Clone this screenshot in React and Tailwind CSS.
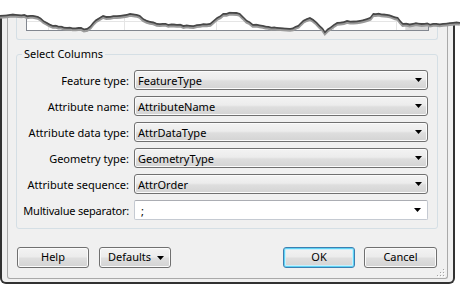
import React from "react";

const font = { fontFamily: '"Noto Sans", "Liberation Sans", sans-serif' };

// rough torn-paper edge at the top of the screenshot
const tearPts = [
  [0, 15], [10, 14], [33, 15], [38, 16], [47, 22], [53, 25], [67, 27], [87, 28], [93, 22],
  [98, 18], [103, 15], [110, 16], [120, 15], [130, 13], [140, 15], [147, 20], [157, 23],
  [177, 24], [190, 25], [200, 24], [210, 23], [217, 17], [223, 13], [233, 12], [240, 13],
  [247, 20], [253, 24], [263, 25], [277, 27], [290, 28], [298, 25], [303, 20], [310, 17],
  [317, 22], [323, 28], [325, 31], [330, 27], [337, 22], [347, 20], [360, 20], [370, 17],
  [373, 13], [387, 14], [398, 17], [403, 23], [413, 23], [433, 23], [443, 23], [453, 22],
  [460, 22],
];

function roughen(pts) {
  let seed = 7;
  const rnd = () => {
    seed = (seed * 9301 + 49297) % 233280;
    return seed / 233280 - 0.5;
  };
  const out = [];
  for (let i = 0; i < pts.length - 1; i++) {
    const [x1, y1] = pts[i];
    const [x2, y2] = pts[i + 1];
    const n = Math.max(1, Math.round((x2 - x1) / 3));
    for (let k = 0; k < n; k++) {
      const t = k / n;
      out.push([x1 + (x2 - x1) * t, y1 + (y2 - y1) * t + (k === 0 ? 0 : rnd() * 1.4)]);
    }
  }
  out.push(pts[pts.length - 1]);
  return out;
}

function Tear() {
  const pts = roughen(tearPts);
  const line = pts.map(([x, y]) => `${x.toFixed(1)},${y.toFixed(1)}`).join(" L");
  return (
    <svg className="absolute left-0 top-0" width="460" height="40" viewBox="0 0 460 40">
      <defs>
        <filter id="soft" x="-5%" y="-50%" width="110%" height="200%">
          <feGaussianBlur stdDeviation="0.7" />
        </filter>
      </defs>
      <path d={`M${line}`} fill="none" stroke="#9a9a9a" strokeWidth="4" transform="translate(0 1.8)" filter="url(#soft)" />
      <path d={`M${line}`} fill="none" stroke="#474747" strokeWidth="2.2" transform="translate(0 0.7)" />
      <path d={`M0,0 L0,${pts[0][1]} L${line} L460,0 Z`} fill="#ffffff" />
    </svg>
  );
}

function Arrow() {
  return (
    <svg width="7" height="4" viewBox="0 0 7 4" className="shrink-0">
      <path d="M0 0H7L3.5 4Z" fill="#000" />
    </svg>
  );
}

function Combo({ value }) {
  return (
    <div className="flex h-[20px] flex-1 items-center rounded-[3px] border border-[#707070] bg-[linear-gradient(#f3f3f3_0%,#ececec_45%,#dedede_55%,#d3d3d3_100%)] pl-[3px] pr-[5px] shadow-[inset_0_0_0_1px_#fbfbfb]">
      <span className="flex-1 leading-none">{value}</span>
      <Arrow />
    </div>
  );
}

function EditCombo({ value }) {
  return (
    <div className="flex h-[20px] flex-1 items-center rounded-[2px] border border-[#c5cad2] border-t-[#abadb3] bg-white pl-[6px] pr-[6px]">
      <span className="flex-1 leading-none">{value}</span>
      <Arrow />
    </div>
  );
}

const rows = [
  ["Feature type:", "FeatureType"],
  ["Attribute name:", "AttributeName"],
  ["Attribute data type:", "AttrDataType"],
  ["Geometry type:", "GeometryType"],
  ["Attribute sequence:", "AttrOrder"],
];

const btn =
  "flex h-[21px] items-center rounded-[3px] border bg-[linear-gradient(#f3f3f3_0%,#ececec_45%,#dedede_55%,#d3d3d3_100%)] text-black";

function Grip() {
  const dots = [[6, 0], [3, 3], [6, 3], [0, 6], [3, 6], [6, 6]];
  return (
    <svg className="absolute bottom-[1px] right-[2px]" width="8" height="8" viewBox="0 0 8 8">
      {dots.map(([x, y]) => (
        <g key={`${x}-${y}`}>
          <rect x={x + 1} y={y + 1} width="1" height="1" fill="#ffffff" />
          <rect x={x} y={y} width="1" height="1" fill="#a4a4a4" />
        </g>
      ))}
    </svg>
  );
}

const topCols = [22, 76, 92, 80, 37, 63, 9];

export default function App() {
  return (
    <div className="relative h-[285px] w-[460px] overflow-hidden bg-white text-[11px] text-black" style={font}>
      <div className="flex h-[284px] w-[455px] flex-col rounded-b-[6px] border-x-2 border-b-2 border-[#323232] bg-[#f0f0f0] px-[5px] pb-[3px]">
        <div className="relative flex flex-1 flex-col rounded-b-[3px] border-x border-b border-[#a9a9a9] pb-[10px] pl-2 pr-[9px]">
          {/* upper group, cut off by the tear */}
          <div className="h-[40px] shrink-0 rounded-b-[3px] border-x border-b border-[#d5dfe5] pl-[9px] pr-[8px]">
            <div className="flex h-[31px] flex-col border-x border-b border-[#828790] bg-white">
              <div className="flex h-[22px] border-b border-[#e5e5e5]">
                {topCols.map((w, i) => (
                  <div key={i} className="h-full shrink-0 border-r border-[#e5e5e5]" style={{ width: w }} />
                ))}
                <div className="flex-1" />
              </div>
              <div className="flex flex-1">
                {topCols.map((w, i) => (
                  <div key={i} className="h-full shrink-0 border-r border-[#e5e5e5]" style={{ width: w }} />
                ))}
                <div className="flex-1 bg-[#d9d9d9]" />
              </div>
            </div>
          </div>

          <fieldset className="mt-[7px] rounded-[3px] border border-[#d5dfe5]">
            <legend className="ml-[5px] px-[2px] leading-[14px]">Select Columns</legend>
            <div className="flex flex-col gap-[6px] pb-[8px] pr-[9px] pt-[9px]">
              {rows.map(([label, value]) => (
                <div key={label} className="flex items-center">
                  <span className="w-[112px] text-right leading-none">{label}</span>
                  <div className="ml-[5px] flex flex-1">
                    <Combo value={value} />
                  </div>
                </div>
              ))}
              <div className="flex items-center">
                <span className="w-[112px] text-right leading-none tracking-[-0.2px]">Multivalue separator:</span>
                <div className="ml-[5px] flex flex-1">
                  <EditCombo value=";" />
                </div>
              </div>
            </div>
          </fieldset>

          <div className="mt-[18px] flex items-center px-px">
            <button className={`${btn} w-[72px] justify-center border-[#707070] shadow-[inset_0_0_0_1px_#fbfbfb]`}>Help</button>
            <button className={`${btn} ml-[10px] w-[72px] justify-between border-[#707070] pl-[8px] pr-[6px] shadow-[inset_0_0_0_1px_#fbfbfb]`}>
              <span>Defaults</span>
              <Arrow />
            </button>
            <div className="flex-1" />
            <button className={`${btn} w-[72px] justify-center border-[#3c7fb1] shadow-[inset_0_0_0_1px_#5fd3f5,inset_0_0_0_2px_#c8effc]`}>OK</button>
            <button className={`${btn} ml-[9px] w-[73px] justify-center border-[#707070] shadow-[inset_0_0_0_1px_#fbfbfb]`}>Cancel</button>
          </div>
          <Grip />
        </div>
      </div>
      <Tear />
    </div>
  );
}
